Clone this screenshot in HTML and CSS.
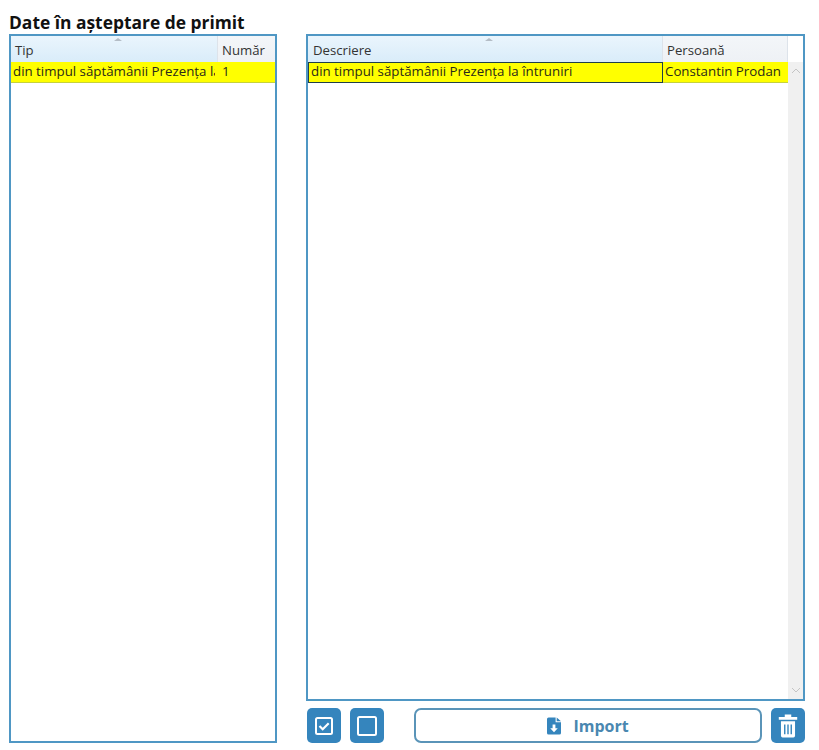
FILE: index.html
```html
<!DOCTYPE html>
<html lang="ro">
<head>
<meta charset="utf-8">
<title>Date în așteptare de primit</title>
<link rel="stylesheet" href="styles.css">
</head>
<body>
<h1 class="title">Date în așteptare de primit</h1>
<main class="columns">
  <section class="panel panel-left">
    <div class="head head-left">
      <div class="hcell hcell-first">Tip<span class="sort"></span></div>
      <div class="hcell">Număr</div>
    </div>
    <div class="row row-left">
      <div class="cell clip">din timpul săptămânii Prezența la întruniri</div>
      <div class="cell">1</div>
    </div>
  </section>
  <section class="right">
    <div class="panel panel-right">
      <div class="head head-right">
        <div class="hcell hcell-first">Descriere<span class="sort"></span></div>
        <div class="hcell">Persoană</div>
        <div class="hfill"></div>
      </div>
      <div class="body-right">
        <div class="rows">
          <div class="row row-right">
            <div class="cell cell-focus">din timpul săptămânii Prezența la întruniri</div>
            <div class="cell">Constantin Prodan</div>
          </div>
        </div>
        <div class="scrollbar">
          <svg class="chev" width="10" height="6" viewBox="0 0 10 6"><path d="M1 5l4-4 4 4" fill="none" stroke="#c4c4c4" stroke-width="1"/></svg>
          <svg class="chev" width="10" height="6" viewBox="0 0 10 6"><path d="M1 1l4 4 4-4" fill="none" stroke="#c4c4c4" stroke-width="1"/></svg>
        </div>
      </div>
    </div>
    <div class="actions">
      <button class="icon-btn" type="button" aria-label="Selectează tot">
        <svg width="22" height="22" viewBox="0 0 22 22"><rect x="3" y="3" width="16" height="16" rx="1.5" fill="none" stroke="#fff" stroke-width="2"/><path d="M6.5 11l3.2 3.2 6-6" fill="none" stroke="#fff" stroke-width="2.2"/></svg>
      </button>
      <button class="icon-btn btn-second" type="button" aria-label="Deselectează tot">
        <svg width="22" height="22" viewBox="0 0 22 22"><rect x="2" y="2" width="18" height="18" rx="1.5" fill="none" stroke="#fff" stroke-width="2"/></svg>
      </button>
      <button class="import-btn" type="button">
        <svg width="14" height="18" viewBox="0 0 13 16"><path d="M0 1.5A1.5 1.5 0 0 1 1.5 0H8v4.5h5v10a1.5 1.5 0 0 1-1.5 1.5h-10A1.5 1.5 0 0 1 0 14.5zM9 0l4 3.5H9zM5.2 6.5v3.7H3l3.5 3.6 3.5-3.6H7.8V6.5z" fill="#3585bd" fill-rule="evenodd"/></svg>
        <span>Import</span>
      </button>
      <button class="icon-btn" type="button" aria-label="Șterge">
        <svg width="22" height="26" viewBox="0 0 20 24"><path d="M7 2.5h6M1.5 5h17" fill="none" stroke="#fff" stroke-width="2.4"/><path d="M3.5 7.5h13V21a1.5 1.5 0 0 1-1.5 1.5H5A1.5 1.5 0 0 1 3.5 21z" fill="#fff"/><path d="M7 10.5v9M10 10.5v9M13 10.5v9" stroke="#3585bd" stroke-width="1.3"/></svg>
      </button>
    </div>
  </section>
</main>
</body>
</html>
```
FILE: styles.css
```css
* { box-sizing: border-box; }
html, body { margin: 0; padding: 0; }
body {
  width: 819px;
  height: 750px;
  background: #fff;
  color: #222;
  font-family: "Open Sans", "Noto Sans", sans-serif;
  overflow: hidden;
}
.title {
  margin: 0;
  padding: 12px 0 0 9px;
  height: 34px;
  font-size: 17.4px;
  line-height: 20px;
  font-weight: 700;
  color: #111;
}
.columns {
  display: flex;
  padding-left: 9px;
}
.panel {
  border: 2px solid #4f97c4;
  background: #fff;
}
.panel-left { width: 268px; height: 709px; }
.right { margin-left: 29px; width: 499px; display: flex; flex-direction: column; }
.panel-right { height: 667px; display: flex; flex-direction: column; }
.head { display: flex; height: 26px; }
.head-left .hcell-first { width: 207px; }
.head-left .hcell:last-child { flex: 1; }
.head-right .hcell-first { width: 355px; }
.head-right .hcell:nth-child(2) { width: 125px; }
.hfill { flex: 1; }
.hcell {
  position: relative;
  padding: 5px 0 0 4px;
  font-size: 13.2px;
  line-height: 18px;
  color: #333;
  background: linear-gradient(#f3f6f9, #eef1f5);
  border-right: 1px solid #dde3ea;
}
.hcell-first { background: linear-gradient(#eaf5fd, #d9ecf9); }
.head-right .hcell-first { padding-left: 5px; }
.hcell:last-child { border-right: 0; }
.sort {
  position: absolute;
  top: 2px;
  left: 50%;
  width: 0;
  height: 0;
  border-left: 4px solid transparent;
  border-right: 4px solid transparent;
  border-bottom: 3px solid #b4bdc6;
}
.row { display: flex; height: 21px; background: #ffff00; }
.row-left { border-bottom: 1px solid #c6d23c; }
.row-left .cell:first-child { width: 204px; margin-right: 3px; }
.cell {
  padding: 0 0 0 2px;
  font-size: 13.3px;
  line-height: 18px;
  color: #2a2a1a;
  white-space: nowrap;
  overflow: hidden;
}
.row-left .cell:last-child { padding-left: 4px; }
.body-right { flex: 1; display: flex; min-height: 0; }
.rows { width: 480px; flex: none; }
.row-right .cell:first-child { width: 355px; border: 1px solid #1f3f4a; padding-left: 2px; line-height: 16px; }
.row-right .cell:last-child { flex: 1; padding-left: 2px; border-bottom: 1px solid #c6d23c; }
.scrollbar {
  width: 15px;
  flex: none;
  background: #f0f0f0;
  display: flex;
  flex-direction: column;
  justify-content: space-between;
  align-items: center;
  padding: 6px 0;
}
.chev { display: block; }
.actions {
  display: flex;
  align-items: stretch;
  height: 35px;
  margin-top: 7px;
  padding-left: 1px;
}
.icon-btn {
  width: 34px;
  height: 35px;
  padding: 0;
  border: 0;
  border-radius: 5px;
  background: #3585bd;
  display: flex;
  align-items: center;
  justify-content: center;
}
.btn-second { margin-left: 9px; }
.import-btn {
  width: 348px;
  margin: 0 9px 0 30px;
  padding: 0;
  border: 2px solid #5a94b8;
  border-radius: 7px;
  background: #fff;
  color: #4a87b0;
  font-family: inherit;
  font-size: 16px;
  font-weight: 700;
  display: flex;
  align-items: center;
  justify-content: center;
  gap: 12px;
}
```
